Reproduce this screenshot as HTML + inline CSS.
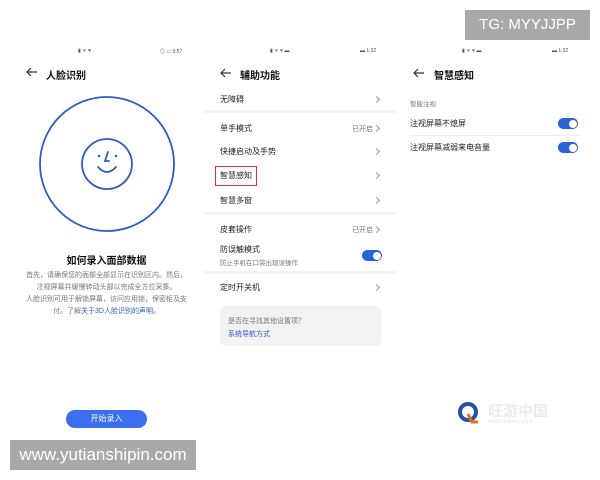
<!DOCTYPE html>
<html><head><meta charset="utf-8"><style>
*{margin:0;padding:0;box-sizing:border-box}
body{width:600px;height:480px;background:#fff;position:relative;overflow:hidden;font-family:"Liberation Sans","Noto Sans CJK SC",sans-serif;color:#222}
.a{position:absolute;white-space:nowrap}
.t{font-size:8px;color:#222}
.h{font-size:10px;color:#111;font-weight:bold}
.g{font-size:7px;color:#777}
.chev{position:absolute;width:5px;height:5px;border-right:1px solid #999;border-top:1px solid #999;transform:rotate(45deg)}
.band{position:absolute;height:3px;background:#f3f3f3}
.tog{position:absolute;width:20px;height:11px;border-radius:6px;background:#2a62d8}
.tog:after{content:"";position:absolute;right:1.5px;top:1.5px;width:8px;height:8px;border-radius:50%;background:#fff}
.st{font-size:5px;color:#555}
</style></head><body>
<!-- panel1 -->
<div class="a st" style="left:78px;top:48px">▮ ᯤ ♥</div>
<div class="a st" style="left:160px;top:48px">◎ ▭ 9:57</div>
<svg class="a" style="left:26px;top:67px" width="12" height="10"><path d="M11 5H1M5 1L1 5L5 9" stroke="#333" stroke-width="1.2" fill="none"/></svg>
<div class="a h" style="left:46px;top:67px">人脸识别</div>
<svg class="a" style="left:36px;top:93px" width="142" height="142"><circle cx="71" cy="71" r="67" stroke="#2d5cc4" stroke-width="1.8" fill="none"/><circle cx="71" cy="71" r="25" stroke="#2d5cc4" stroke-width="1.8" fill="none"/><circle cx="63" cy="63" r="1.3" fill="#2d5cc4"/><circle cx="80" cy="63" r="1.3" fill="#2d5cc4"/><path d="M72 59L69 68H73M62 74Q71 84 80 74" stroke="#2d5cc4" stroke-width="1.8" fill="none" stroke-linecap="round"/></svg>
<div class="a" style="left:0;width:213px;top:252px;text-align:center;font-size:10px;font-weight:bold;color:#111">如何录入面部数据</div>
<div class="a g" style="left:0;width:213px;top:270px;text-align:center;line-height:11.5px;white-space:normal;padding:0 26px">首先，请确保您的面部全部显示在识别区内。然后，注视屏幕并缓慢转动头部以完成全方位采集。</div>
<div class="a g" style="left:0;width:213px;top:294px;text-align:center;line-height:11.5px;white-space:normal;padding:0 26px">人脸识别可用于解锁屏幕，访问应用锁，保密柜及支付。了解<span style="color:#2d5cc4">关于3D人脸识别的声明</span>。</div>
<div class="a" style="left:66px;top:410px;width:81px;height:18px;border-radius:9px;background:#3b6ff0;color:#fff;font-size:8px;text-align:center;line-height:18px">开始录入</div>
<div class="a" style="left:10px;top:440px;width:186px;height:30px;background:#a9a9a9;color:#fff;font-size:17px;text-align:center;line-height:30px">www.yutianshipin.com</div>
<!-- panel2 -->
<div class="a st" style="left:270px;top:48px">▮ ᯤ ♥ ▬</div>
<div class="a st" style="left:360px;top:48px">▬ 1:32</div>
<svg class="a" style="left:220px;top:68px" width="12" height="10"><path d="M11 5H1M5 1L1 5L5 9" stroke="#333" stroke-width="1.2" fill="none"/></svg>
<div class="a h" style="left:240px;top:67px">辅助功能</div>
<div class="a t" style="left:220px;top:94px">无障碍</div><div class="chev" style="left:374px;top:97px"></div>
<div class="band" style="left:204px;width:192px;top:110px"></div>
<div class="a t" style="left:220px;top:123px">单手模式</div><div class="a g" style="left:352px;top:124px">已开启</div><div class="chev" style="left:374px;top:126px"></div>
<div class="a t" style="left:220px;top:146px">快捷启动及手势</div><div class="chev" style="left:374px;top:149px"></div>
<div class="a t" style="left:220px;top:170px">智慧感知</div><div class="chev" style="left:374px;top:173px"></div>
<div class="a" style="left:215px;top:166px;width:42px;height:20px;border:1.5px solid #d2363a"></div>
<div class="a t" style="left:220px;top:195px">智慧多窗</div><div class="chev" style="left:374px;top:198px"></div>
<div class="band" style="left:204px;width:192px;top:212px"></div>
<div class="a t" style="left:220px;top:224px">皮套操作</div><div class="a g" style="left:352px;top:225px">已开启</div><div class="chev" style="left:374px;top:227px"></div>
<div class="a t" style="left:220px;top:244px">防误触模式</div>
<div class="a g" style="left:220px;top:257px;font-size:6.5px">防止手机在口袋出现误操作</div>
<div class="tog" style="left:362px;top:250px"></div>
<div class="band" style="left:204px;width:192px;top:271px"></div>
<div class="a t" style="left:220px;top:282px">定时开关机</div><div class="chev" style="left:374px;top:285px"></div>
<div class="a" style="left:220px;top:306px;width:161px;height:40px;background:#f2f2f2;border-radius:6px"></div>
<div class="a g" style="left:228px;top:316px">是否在寻找其他设置项？</div>
<div class="a" style="left:228px;top:329px;font-size:7px;color:#2d5cc4">系统导航方式</div>
<!-- panel3 -->
<div class="a" style="left:465px;top:10px;width:125px;height:30px;background:#a9a9a9;color:#fff;font-size:15px;text-align:center;line-height:30px">TG: MYYJJPP</div>
<div class="a st" style="left:462px;top:48px">▮ ᯤ ♥ ▬</div>
<div class="a st" style="left:552px;top:48px">▬ 1:32</div>
<svg class="a" style="left:413px;top:68px" width="12" height="10"><path d="M11 5H1M5 1L1 5L5 9" stroke="#333" stroke-width="1.2" fill="none"/></svg>
<div class="a h" style="left:434px;top:67px">智慧感知</div>
<div class="a g" style="left:410px;top:98px;font-size:6.5px">智能注视</div>
<div class="a t" style="left:410px;top:118px">注视屏幕不熄屏</div>
<div class="tog" style="left:558px;top:118px"></div>
<div class="a" style="left:410px;top:135px;width:170px;height:1px;background:#eee"></div>
<div class="a t" style="left:410px;top:142px">注视屏幕减弱来电音量</div>
<div class="tog" style="left:558px;top:142px"></div>
<!-- logo -->
<svg class="a" style="left:458px;top:402px" width="20" height="22"><circle cx="10" cy="10" r="8" stroke="#2452a8" stroke-width="4" fill="none"/><path d="M10 12L14 20H20" stroke="#e8731a" stroke-width="3" fill="none"/></svg>
<div class="a" style="left:488px;top:400px;font-size:15px;color:#ececec;font-weight:bold">旺游中国</div>
<div class="a" style="left:488px;top:419px;font-size:6px;color:#e6e6e6">www.qulvvy.com</div>
</body></html>
